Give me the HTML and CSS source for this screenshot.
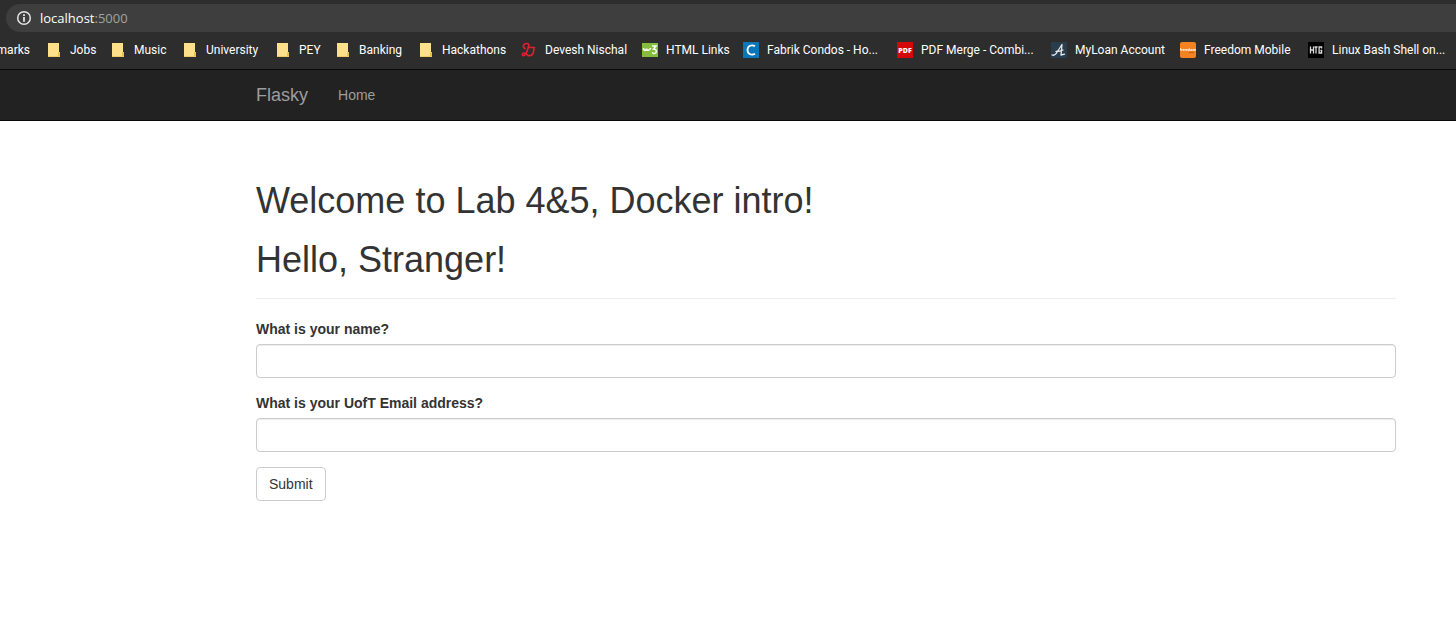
FILE: index.html
```html
<!DOCTYPE html>
<html lang="en">
<head>
<meta charset="utf-8">
<title>Flasky</title>
<link rel="stylesheet" href="styles.css">
</head>
<body>
<header class="browser">
  <div class="address">
    <svg class="info" viewBox="0 0 16 16" aria-hidden="true"><circle cx="8" cy="8" r="6.3" fill="none" stroke="#e4e4e4" stroke-width="1.5"/><path d="M7.1 4.3h1.8v1.8H7.1zM7.1 7.1h1.8v4.6H7.1z" fill="#e4e4e4"/></svg>
    <span class="url">localhost<span class="port">:5000</span></span>
  </div>
  <nav class="bookmarks" aria-label="Bookmarks">
    <a class="bookmark clipped" href="#">marks</a>
    <a class="bookmark" href="#"><svg class="icon" viewBox="0 0 16 16"><path d="M2 1h11v9h1v5H2z" fill="#ffe08a"/><path d="M12 15v-4l1-1h1v5z" fill="#e8c04f"/><path d="M2 14h12v1H2z" fill="#efcb68"/></svg>Jobs</a>
    <a class="bookmark" href="#"><svg class="icon" viewBox="0 0 16 16"><path d="M2 1h11v9h1v5H2z" fill="#ffe08a"/><path d="M12 15v-4l1-1h1v5z" fill="#e8c04f"/><path d="M2 14h12v1H2z" fill="#efcb68"/></svg>Music</a>
    <a class="bookmark" href="#"><svg class="icon" viewBox="0 0 16 16"><path d="M2 1h11v9h1v5H2z" fill="#ffe08a"/><path d="M12 15v-4l1-1h1v5z" fill="#e8c04f"/><path d="M2 14h12v1H2z" fill="#efcb68"/></svg>University</a>
    <a class="bookmark" href="#"><svg class="icon" viewBox="0 0 16 16"><path d="M2 1h11v9h1v5H2z" fill="#ffe08a"/><path d="M12 15v-4l1-1h1v5z" fill="#e8c04f"/><path d="M2 14h12v1H2z" fill="#efcb68"/></svg>PEY</a>
    <a class="bookmark" href="#"><svg class="icon" viewBox="0 0 16 16"><path d="M2 1h11v9h1v5H2z" fill="#ffe08a"/><path d="M12 15v-4l1-1h1v5z" fill="#e8c04f"/><path d="M2 14h12v1H2z" fill="#efcb68"/></svg>Banking</a>
    <a class="bookmark" href="#"><svg class="icon" viewBox="0 0 16 16"><path d="M2 1h11v9h1v5H2z" fill="#ffe08a"/><path d="M12 15v-4l1-1h1v5z" fill="#e8c04f"/><path d="M2 14h12v1H2z" fill="#efcb68"/></svg>Hackathons</a>
    <a class="bookmark" href="#"><svg class="icon" viewBox="0 0 16 16" fill="none" stroke="#e01f2f" stroke-width="1.7" stroke-linecap="round" stroke-linejoin="round"><path d="M4 6.500C1.500 5.500 2 1.500 5.500 1.500C7.500 1.500 8.500 2.500 7.500 5L5.500 10.500C4.500 14 1.500 14.500 1.500 12.500C1.500 10.500 4.500 10.500 6 12.500C7.500 14.500 12 14 12.500 10L13 6M7 5.500H13.500"/></svg>Devesh Nischal</a>
    <a class="bookmark" href="#"><svg class="icon" viewBox="0 0 16 16"><path d="M0 1h16v14H0z" fill="#85be3d"/><path d="M1.500 6c0 3 3 3 3 .5c0 2.500 3.500 2.500 4-.5M10 4h4l-2.500 3c4 0 3.500 5 0 4.500l-1.500-1" fill="none" stroke="#fff" stroke-width="1.500"/></svg>HTML Links</a>
    <a class="bookmark" href="#"><svg class="icon" viewBox="0 0 16 16"><path d="M0 0h16v16H0z" fill="#0876bb"/><path d="M12 4.300C9 2.300 4.500 3.500 4.500 8S9 13.700 12 11.700" fill="none" stroke="#fff" stroke-width="1.800"/></svg>Fabrik Condos - Ho...</a>
    <a class="bookmark" href="#"><svg class="icon" viewBox="0 0 16 16"><path d="M0 0h16v16H0z" fill="#d30909"/><text class="pdf" x="8" y="10.500" text-anchor="middle">PDF</text></svg>PDF Merge - Combi...</a>
    <a class="bookmark" href="#"><svg class="icon" viewBox="0 0 16 16"><path d="M0 0h16v16H0z" fill="#293d4c"/><path d="M1 13c2.500 1 4-.5 5.500-3.500L11 2.500L10 13l3.500-.8M5 9.500c2.500 0 5-.3 7-1.500" fill="none" stroke="#e6eaec" stroke-width="1.300" stroke-linecap="round" stroke-linejoin="round"/></svg>MyLoan Account</a>
    <a class="bookmark" href="#"><svg class="icon" viewBox="0 0 16 16"><rect width="16" height="16" rx="2" fill="#f58220"/><text class="freedom" x="8" y="9" text-anchor="middle">freedom</text><path d="M9 10.500h5" stroke="#a95716" stroke-width=".8"/></svg>Freedom Mobile</a>
    <a class="bookmark" href="#"><svg class="icon" viewBox="0 0 16 16"><path d="M0 0h16v16H0z" fill="#000"/><path d="M2.500 4.500v7M5.500 4.500v7M2.500 8h3M6.500 5h3M8 5v6.500M13.600 6.500V5h-2.500v6h2.500V8.500h-1.200" fill="none" stroke="#ddd" stroke-width="1.300"/></svg>Linux Bash Shell on...</a>
  </nav>
</header>
<nav class="navbar" aria-label="Main">
  <a class="brand" href="#">Flasky</a>
  <a class="nav-link" href="#">Home</a>
</nav>
<main class="content">
  <div class="page-header">
    <h1>Welcome to Lab 4&amp;5, Docker intro!</h1>
    <h1>Hello, Stranger!</h1>
  </div>
  <form class="form">
    <div class="group">
      <label for="name">What is your name?</label>
      <input id="name" type="text">
    </div>
    <div class="group">
      <label for="email">What is your UofT Email address?</label>
      <input id="email" type="text">
    </div>
    <button class="submit" type="submit">Submit</button>
  </form>
</main>
</body>
</html>
```
FILE: styles.css
```css
* {
  box-sizing: border-box;
}

body {
  margin: 0;
  background: #fff;
  color: #333;
  font: 14px/20px "Liberation Sans", Arial, sans-serif;
}

a {
  text-decoration: none;
}

.browser {
  padding: 4px 0 1px;
  background: #2d2d2d;
  color: #fff;
  font-family: "Open Sans", sans-serif;
  overflow: hidden;
}

.address {
  display: flex;
  align-items: center;
  gap: 8px;
  height: 28px;
  margin-left: 6px;
  padding-left: 10px;
  border-radius: 14px 0 0 14px;
  background: #3e3e3e;
  font-size: 13px;
}

.info,
.icon {
  flex: none;
  width: 16px;
  height: 16px;
}

.port {
  color: #a2a2a2;
}

.bookmarks {
  display: grid;
  grid-template-columns: 30px 64px 72px 93px 60px 83px 103px 121px 101px 154px 154px 129px 128px 1fr;
  align-items: center;
  height: 36px;
  font-family: Roboto, sans-serif;
  font-size: 12px;
}

.bookmark {
  display: flex;
  align-items: center;
  gap: 8px;
  padding-left: 16px;
  color: #fff;
  white-space: nowrap;
}

.clipped {
  justify-content: flex-end;
  padding-left: 0;
}

.pdf {
  fill: #fff;
  font: 800 7px "Open Sans", sans-serif;
}

.freedom {
  fill: #fff;
  font: bold 4px "Open Sans", sans-serif;
}

.navbar {
  display: flex;
  align-items: center;
  gap: 30px;
  height: 52px;
  padding: 0 60px 0 256px;
  border: solid #080808;
  border-width: 1px 0;
  background: #222;
}

.brand,
.nav-link {
  color: #9d9d9d;
}

.brand {
  font-size: 18px;
}

.content {
  padding: 60px 60px 40px 256px;
}

.page-header {
  display: grid;
  gap: 19px;
  padding-bottom: 18px;
  border-bottom: 1px solid #eee;
}

h1 {
  margin: 0;
  font-size: 36px;
  font-weight: 500;
  line-height: 40px;
}

.form {
  display: grid;
  gap: 15px;
  justify-items: start;
  margin-top: 20px;
}

.group {
  display: grid;
  gap: 5px;
  width: 100%;
}

label {
  font-weight: bold;
}

input {
  width: 100%;
  height: 34px;
  padding: 6px 12px;
  border: 1px solid #ccc;
  border-radius: 4px;
  box-shadow: inset 0 1px 1px rgba(0, 0, 0, 0.075);
  font: inherit;
}

.submit {
  padding: 6px 12px;
  border: 1px solid #ccc;
  border-radius: 4px;
  background: #fff;
  color: #333;
  font: inherit;
}
```
